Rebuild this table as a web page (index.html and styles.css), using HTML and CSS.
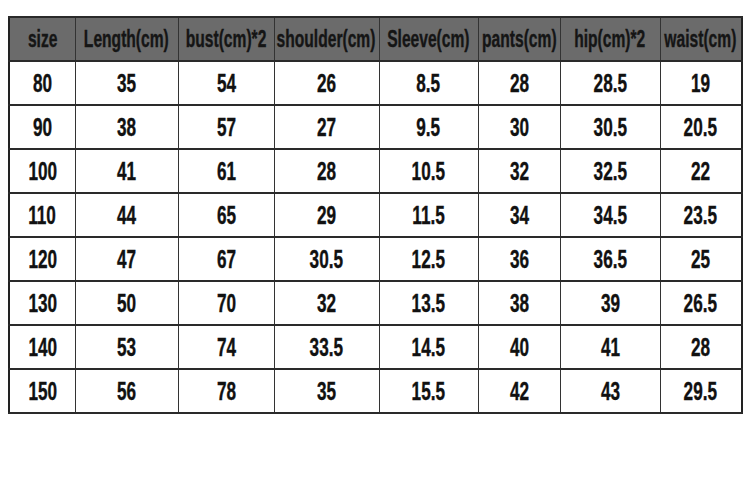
FILE: index.html
```html
<!DOCTYPE html>
<html>
<head>
<meta charset="utf-8">
<link rel="stylesheet" href="styles.css">
</head>
<body>
<table class="size-table">
  <colgroup>
    <col class="c1"><col class="c2"><col class="c3"><col class="c4"><col class="c5"><col class="c6"><col class="c7"><col class="c8">
  </colgroup>
  <thead>
    <tr><th><span class="t">size</span></th><th><span class="t">Length(cm)</span></th><th><span class="t">bust(cm)*2</span></th><th><span class="t">shoulder(cm)</span></th><th><span class="t">Sleeve(cm)</span></th><th><span class="t">pants(cm)</span></th><th><span class="t">hip(cm)*2</span></th><th><span class="t">waist(cm)</span></th></tr>
  </thead>
  <tbody>
    <tr><td><span class="t">80</span></td><td><span class="t">35</span></td><td><span class="t">54</span></td><td><span class="t">26</span></td><td><span class="t">8.5</span></td><td><span class="t">28</span></td><td><span class="t">28.5</span></td><td><span class="t">19</span></td></tr>
    <tr><td><span class="t">90</span></td><td><span class="t">38</span></td><td><span class="t">57</span></td><td><span class="t">27</span></td><td><span class="t">9.5</span></td><td><span class="t">30</span></td><td><span class="t">30.5</span></td><td><span class="t">20.5</span></td></tr>
    <tr><td><span class="t">100</span></td><td><span class="t">41</span></td><td><span class="t">61</span></td><td><span class="t">28</span></td><td><span class="t">10.5</span></td><td><span class="t">32</span></td><td><span class="t">32.5</span></td><td><span class="t">22</span></td></tr>
    <tr><td><span class="t">110</span></td><td><span class="t">44</span></td><td><span class="t">65</span></td><td><span class="t">29</span></td><td><span class="t">11.5</span></td><td><span class="t">34</span></td><td><span class="t">34.5</span></td><td><span class="t">23.5</span></td></tr>
    <tr><td><span class="t">120</span></td><td><span class="t">47</span></td><td><span class="t">67</span></td><td><span class="t">30.5</span></td><td><span class="t">12.5</span></td><td><span class="t">36</span></td><td><span class="t">36.5</span></td><td><span class="t">25</span></td></tr>
    <tr><td><span class="t">130</span></td><td><span class="t">50</span></td><td><span class="t">70</span></td><td><span class="t">32</span></td><td><span class="t">13.5</span></td><td><span class="t">38</span></td><td><span class="t">39</span></td><td><span class="t">26.5</span></td></tr>
    <tr><td><span class="t">140</span></td><td><span class="t">53</span></td><td><span class="t">74</span></td><td><span class="t">33.5</span></td><td><span class="t">14.5</span></td><td><span class="t">40</span></td><td><span class="t">41</span></td><td><span class="t">28</span></td></tr>
    <tr><td><span class="t">150</span></td><td><span class="t">56</span></td><td><span class="t">78</span></td><td><span class="t">35</span></td><td><span class="t">15.5</span></td><td><span class="t">42</span></td><td><span class="t">43</span></td><td><span class="t">29.5</span></td></tr>
  </tbody>
</table>
</body>
</html>
```
FILE: styles.css
```css
html, body {
  margin: 0;
  padding: 0;
  background: #ffffff;
}
body {
  padding: 16px 0 0 8px;
}
.size-table {
  border-collapse: collapse;
  table-layout: fixed;
  width: 733px;
  font-family: "Liberation Sans", Arial, sans-serif;
  font-weight: bold;
  color: #111;
  border: 2px solid #222;
}
.c1 { width: 66px; }
.c2 { width: 103px; }
.c3 { width: 96px; }
.c4 { width: 105px; }
.c5 { width: 99px; }
.c6 { width: 82px; }
.c7 { width: 100px; }
.c8 { width: 82px; }
.size-table th,
.size-table td {
  height: 42px;
  padding: 0;
  text-align: center;
  vertical-align: middle;
  border-left: 1px solid #333;
  border-right: 1px solid #333;
  border-top: 2px solid #2a2a2a;
  border-bottom: 2px solid #2a2a2a;
  white-space: nowrap;
  overflow: visible;
}
.size-table th {
  background: #6b6b6b;
  color: #151515;
  font-size: 24px;
}
.size-table td {
  font-size: 26px;
}
.t {
  display: inline-block;
  margin: -2px -60px 0;
  transform: scaleX(0.66);
  transform-origin: center;
  line-height: 1;
  -webkit-text-stroke: 0.4px currentColor;
}
.size-table th .t {
  margin-top: 0;
  transform: scaleX(0.65);
}
```
